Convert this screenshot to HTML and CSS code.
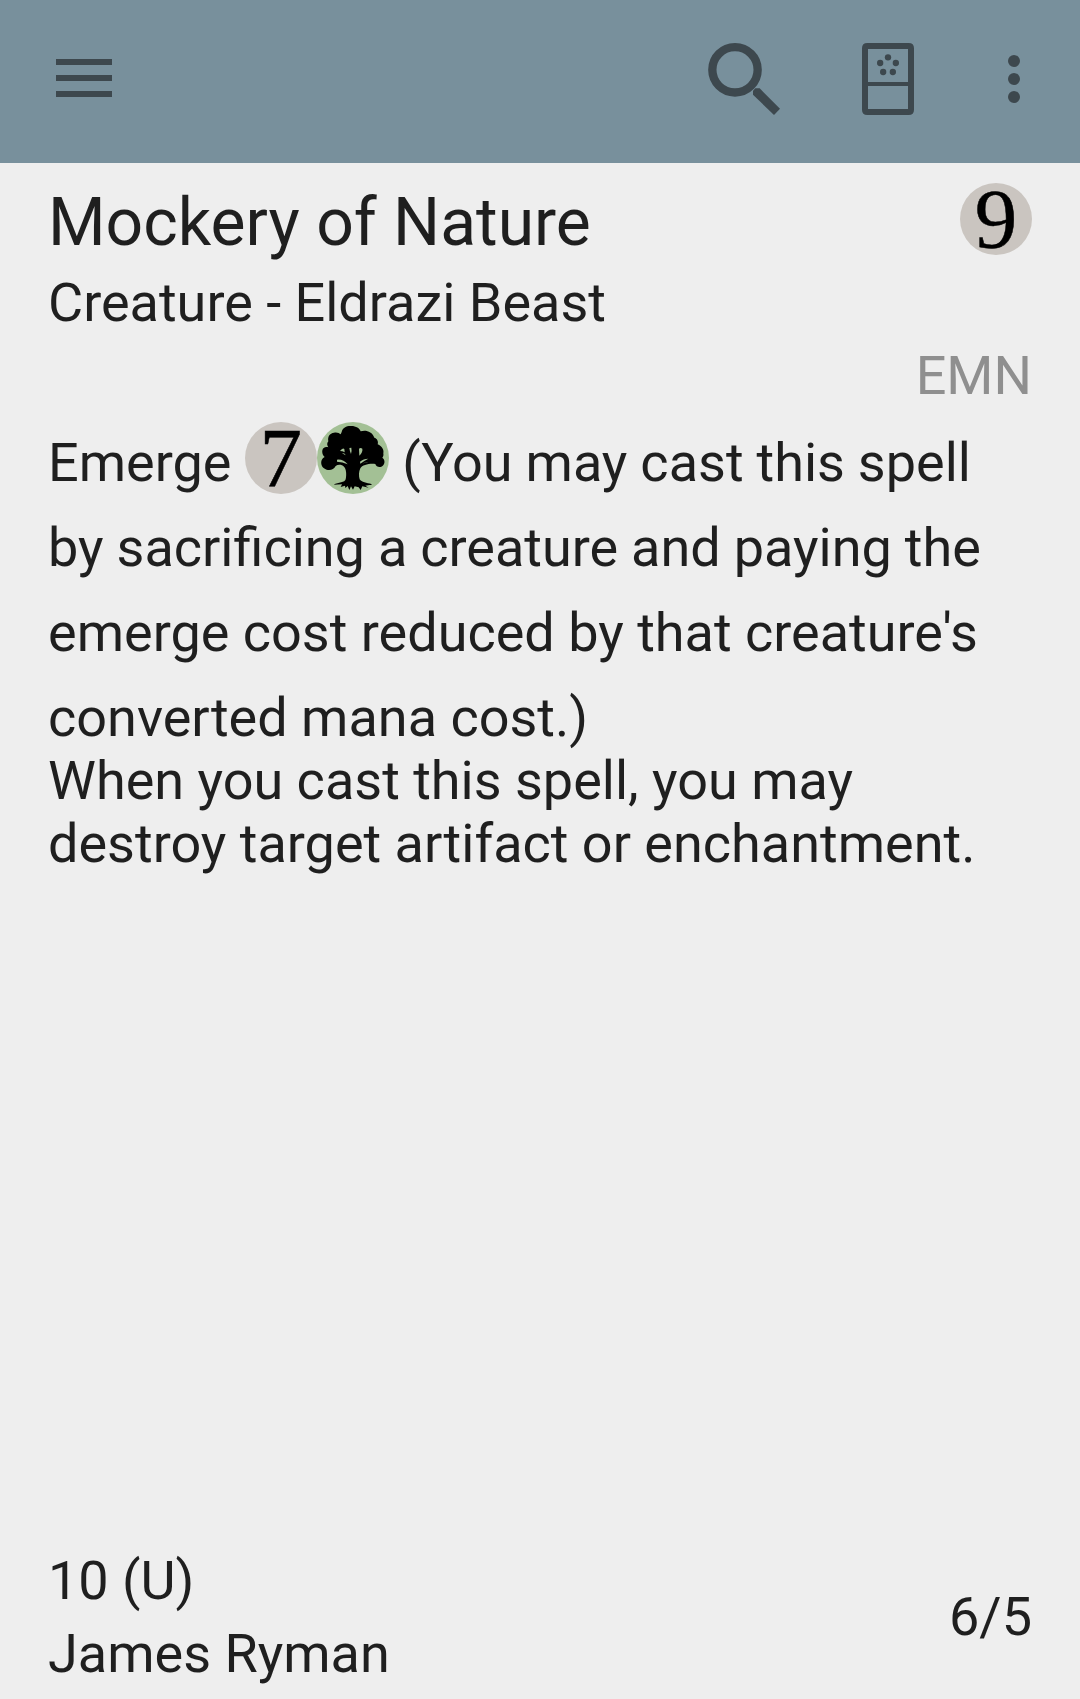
FILE: index.html
```html
<!DOCTYPE html>
<html lang="en">
<head>
<meta charset="utf-8">
<title>Mockery of Nature</title>
<link rel="stylesheet" href="styles.css">
</head>
<body>
<header class="toolbar">
  <svg class="icon menu" viewBox="0 0 72 72"><path d="M8 16h56v6H8zM8 32h56v6H8zM8 48h56v6H8z"/></svg>
  <svg class="icon search" viewBox="0 0 216 216"><circle class="ring" cx="81" cy="80.5" r="68"/><path d="M135 143l7-7h13l61 61-18 19-63-61z"/></svg>
  <svg class="icon card-view" viewBox="0 0 216 216"><path fill-rule="evenodd" d="M46 0H170Q186 0 186 16V200Q186 216 170 216H46Q30 216 30 200V16Q30 0 46 0ZM48 18V117H168V18ZM48 129V198H168V129Z"/><circle cx="108" cy="43" r="9.5"/><circle cx="84.500" cy="60" r="9.500"/><circle cx="131.500" cy="60" r="9.500"/><circle cx="93.500" cy="87" r="9.500"/><circle cx="122.500" cy="87" r="9.500"/></svg>
  <svg class="icon more" viewBox="0 0 72 72"><circle cx="36" cy="18" r="6"/><circle cx="36" cy="36" r="6"/><circle cx="36" cy="54" r="6"/></svg>
</header>
<main class="card">
  <div class="heading">
    <h1 class="name">Mockery of Nature</h1>
    <span class="mana"><span class="digit">9</span></span>
  </div>
  <p class="type">Creature - Eldrazi Beast</p>
  <p class="set">EMN</p>
  <p class="ability spaced">Emerge <span class="mana"><span class="digit">7</span></span><svg class="mana-tree" viewBox="261 66 216 216">
    <circle class="disc" cx="369" cy="174" r="108"/>
    <path d="M335 96C338 82 351 77 364 78C378 78 389 85 392 94C407 89 426 94 433 113C441 115 446 124 443 133C456 138 463 150 460 160C461 166 460 170 457 173C467 179 465 196 454 200C446 203 438 199 436 192C417 190 397 195 391 205C386 215 386 229 389 238C394 247 411 249 424 252C427 254 424 256 418 255L406 257L416 263L397 259L392 270L386 262L374 259L369 269L363 259L358 270L353 258L346 264L345 257L332 261L336 253L311 254C325 247 345 248 347 238C350 224 349 207 342 200C335 193 324 193 317 198C312 209 300 212 290 209C278 206 272 195 274 184C275 178 279 173 284 171C276 164 274 150 281 144C285 140 291 140 295 142C291 137 290 129 295 124C292 111 299 99 312 98C321 96 328 99 332 103Z"/>
    <path class="gap" d="M330 153Q338 142 343 147L344 157Q338 153 330 153ZM336 160Q345 158 347 166Q342 163 336 160ZM358 144L364 143Q366 153 363 162Q359 153 358 144ZM387 146Q392 142 397 146Q399 157 388 167ZM321 179Q340 177 353 193Q338 186 321 185ZM390 185Q400 176 415 176Q403 182 391 191ZM396 191Q406 185 415 187Q405 188 396 191Z"/>
  </svg> <span class="snug">(You may cast this spell by sacrificing a creature and paying the</span> emerge cost reduced by that creature's converted mana cost.)</p>
  <p class="ability">When you cast this spell, you may destroy target artifact or enchantment.</p>
  <footer class="details">
    <div class="credits"><p class="number">10 (U)</p><p class="artist">James Ryman</p></div>
    <p class="stats">6/5</p>
  </footer>
</main>
</body>
</html>
```
FILE: styles.css
```css
* {
  box-sizing: border-box;
}

body {
  margin: 0;
  height: 1699px;
  display: flex;
  flex-direction: column;
  background: #eee;
  color: #1f1f1f;
  font: 54px/63px Roboto, sans-serif;
}

h1,
p {
  margin: 0;
  font-weight: 400;
}

.toolbar {
  display: flex;
  flex: none;
  height: 163px;
  padding: 43px 30px 0 48px;
  background: #78909c;
}

.icon {
  width: 72px;
  height: 72px;
  fill: #3d484e;
}

.menu {
  margin-right: auto;
}

.search {
  margin-right: 72px;
}

.ring {
  fill: none;
  stroke: #3d484e;
  stroke-width: 25;
}

.card-view {
  margin-right: 54px;
}

.card {
  flex: 1;
  display: flex;
  flex-direction: column;
  padding: 20px 48px 14px;
}

.heading {
  display: flex;
  justify-content: space-between;
  height: 88px;
}

.name {
  font-size: 66px;
  line-height: 80px;
}

.mana {
  display: inline-flex;
  justify-content: center;
  width: 72px;
  height: 72px;
  border-radius: 50%;
  background: #cac5c0;
  vertical-align: -6px;
}

.digit {
  color: #000;
  font: 85px/72px "Liberation Serif", serif;
  -webkit-text-stroke: 0.5px #000;
}

.set {
  margin: 10px 0 13px;
  color: #8f8f8f;
  text-align: right;
}

.ability.spaced {
  line-height: 85px;
  margin-bottom: -11px;
}

.snug {
  word-spacing: -0.45px;
}

.mana-tree {
  width: 72px;
  height: 72px;
  vertical-align: -13px;
}

.disc,
.gap {
  fill: #a3c095;
}

.details {
  display: flex;
  justify-content: space-between;
  align-items: center;
  margin-top: auto;
}

.number {
  margin-bottom: 10px;
}

.stats {
  padding-bottom: 2px;
}
```
